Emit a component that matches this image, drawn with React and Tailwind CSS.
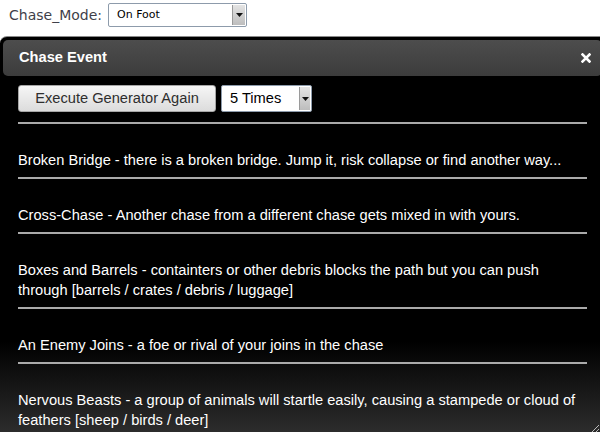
import React from 'react';

const events = [
  'Broken Bridge - there is a broken bridge. Jump it, risk collapse or find another way...',
  'Cross-Chase - Another chase from a different chase gets mixed in with yours.',
  'Boxes and Barrels - containters or other debris blocks the path but you can push through [barrels / crates / debris / luggage]',
  'An Enemy Joins - a foe or rival of your joins in the chase',
  'Nervous Beasts - a group of animals will startle easily, causing a stampede or cloud of feathers [sheep / birds / deer]',
];

const Arrow = ({ className }) => (
  <div className={`flex items-center justify-center bg-gradient-to-b from-[#e4e4e4] to-[#bdbdbd] border-l border-[#9a9a9a] ${className}`}>
    <svg width="7" height="4" viewBox="0 0 7 4"><path d="M0 0h7L3.5 4z" fill="#111" /></svg>
  </div>
);

const App = () => {
  return (
    <div className="w-[600px] h-[432px] overflow-hidden bg-white font-['Liberation_Sans',Arial,sans-serif]">
      {/* mode picker */}
      <div className="flex items-center h-[36px] pl-[9px] pb-[6px]">
        <span className="text-[14px] text-[#3f3f4a] font-['DejaVu_Sans',sans-serif] w-[99px]">Chase_Mode:</span>
        <div className="flex w-[139px] h-[24px] border border-[#8d9bab] rounded-[2px] bg-white">
          <span className="flex-1 pl-[8px] text-[11px] leading-[22px] text-black font-['DejaVu_Sans',sans-serif]">On Foot</span>
          <Arrow className="w-[13px] my-[1px] mr-[1px]" />
        </div>
      </div>

      {/* dialog */}
      <div className="relative w-[605px] h-[396px] bg-[linear-gradient(to_bottom,#000_0px,#000_304px,#2c2c2c_100%)] border-t border-[#8a8a8a] rounded-tl-[7px]">
        <div className="mx-[3px] mt-[3px] h-[36px] rounded-[5px] bg-gradient-to-b from-[#4d4d4d] to-[#3c3c3c] flex items-center justify-between pl-[16px] pr-[11px]">
          <span className="text-white font-bold text-[14.65px]">Chase Event</span>
          <svg width="10" height="10" viewBox="0 0 10 10">
            <path d="M1.5 1.5l7 7M8.5 1.5l-7 7" stroke="#fff" strokeWidth="2.6" strokeLinecap="square" />
          </svg>
        </div>

        <div className="px-[18px] pt-[9px]">
          <div className="flex gap-[5px]">
            <button className="w-[198px] h-[27px] rounded-[3px] border border-[#a6a6a6] bg-gradient-to-b from-[#f6f6f6] to-[#dcdcdc] text-[14.65px] text-[#2e2e2e]">
              Execute Generator Again
            </button>
            <div className="flex w-[91px] h-[27px] border border-[#8d9bab] rounded-[2px] bg-white">
              <span className="flex-1 pl-[8px] text-[14.65px] leading-[25px] text-black">5 Times</span>
              <Arrow className="w-[11px] my-[1px] mr-[1px]" />
            </div>
          </div>
          <div className="mt-[10px] h-[2px] bg-[#aaa]" />

          {events.map((e) => (
            <div key={e}>
              <p className="pt-[26px] pb-[7px] text-[14.65px] leading-[20px] text-white">{e}</p>
              <div className="h-[2px] bg-[#aaa]" />
            </div>
          ))}
        </div>

        <svg className="absolute right-[5px] bottom-0" width="10" height="8" viewBox="0 0 10 8">
          <path d="M9 1L2 8M9 5L6 8" stroke="#bbb" strokeWidth="1" />
        </svg>
      </div>
    </div>
  );
};

export default App;
